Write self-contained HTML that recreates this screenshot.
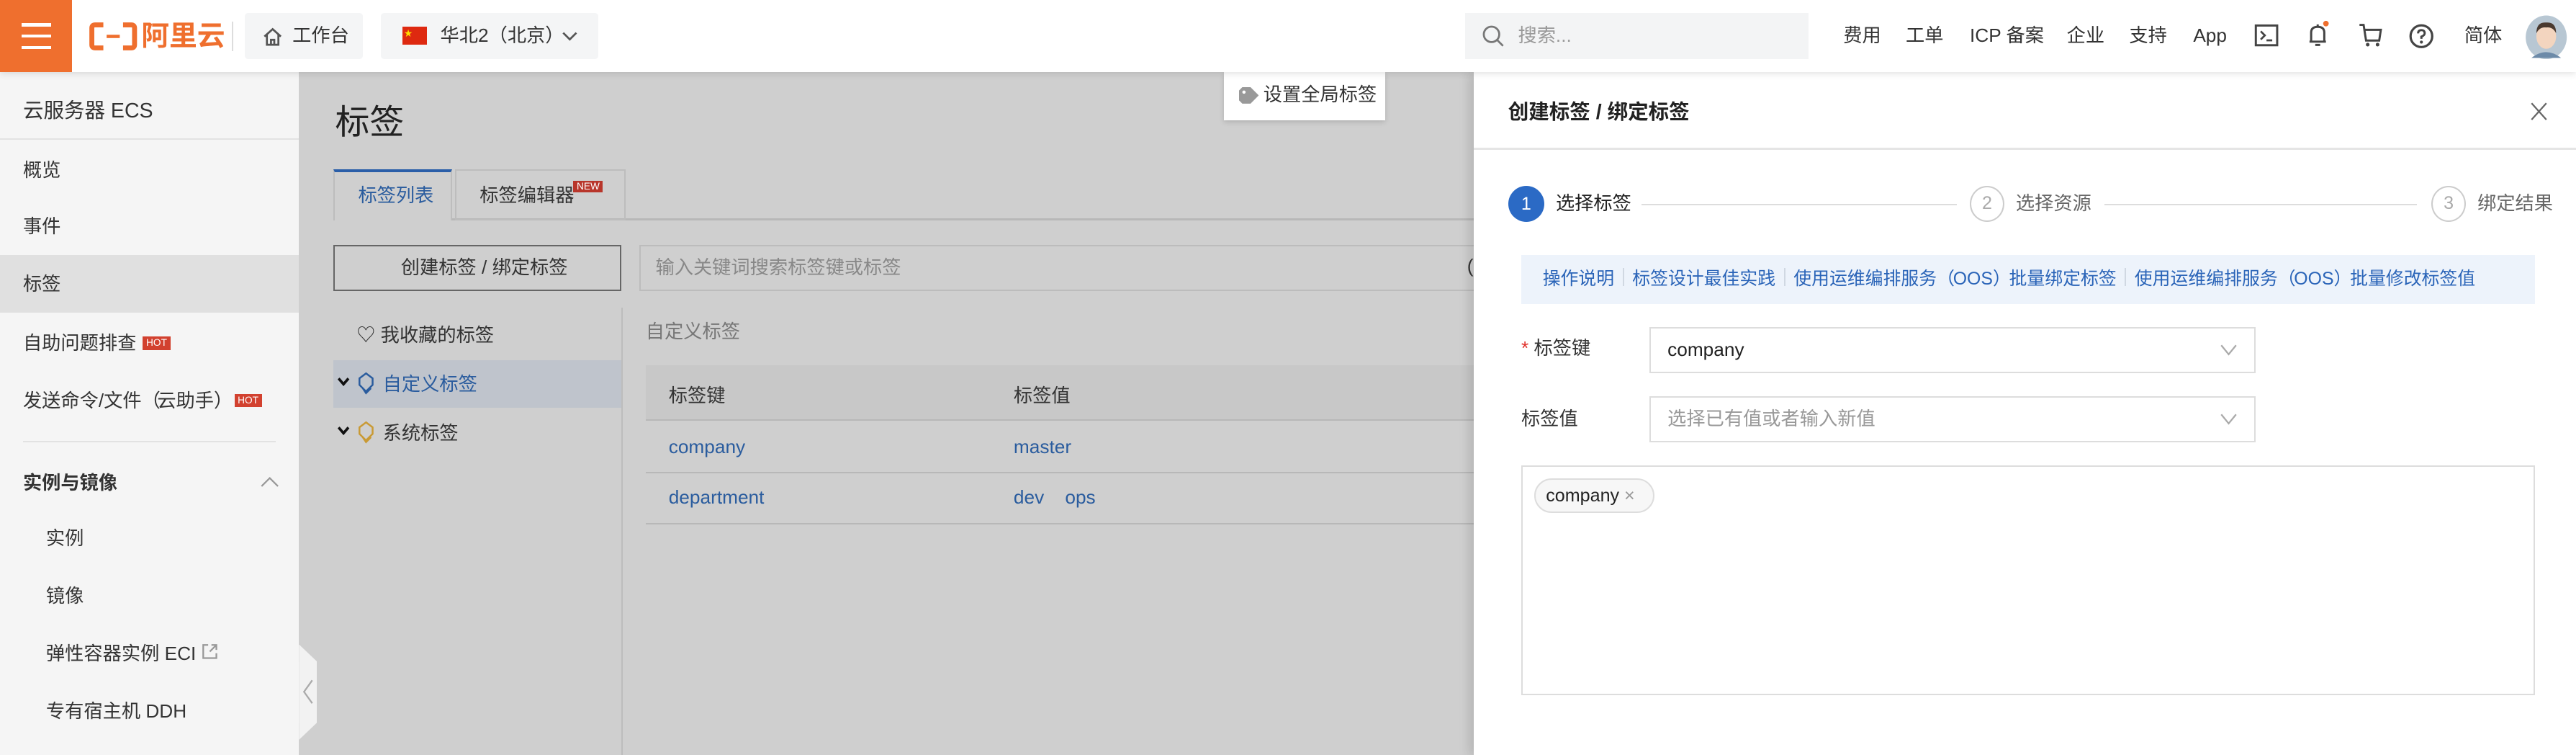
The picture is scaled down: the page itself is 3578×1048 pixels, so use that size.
<!DOCTYPE html>
<html><head><meta charset="utf-8">
<style>
*{margin:0;padding:0;box-sizing:border-box}
html,body{width:3578px;height:1048px;overflow:hidden;background:#cfcfcf}
#w{zoom:2.28189;width:1568px;height:460px;position:relative;overflow:hidden;font-family:"Liberation Sans","Noto Sans CJK SC",sans-serif;font-size:11.5px;line-height:14px;color:#333;background:#cfcfcf}
.a{position:absolute;white-space:nowrap}
.top{left:0;top:0;width:1568px;height:44px;background:#fff;box-shadow:0 1px 4px rgba(0,0,0,.12);z-index:5}
.side{left:0;top:44px;width:182px;height:416px;background:#f5f5f5}
.si{left:14px;color:#333}
.hot{display:inline-block;background:#d2412f;color:#fff;font-size:6px;line-height:8px;padding:0 2px;margin-left:4px;vertical-align:2px}
.blue{color:#2a5c9e}
.drawer{left:897px;top:44px;width:671px;height:416px;background:#fff;box-shadow:-3px 0 6px rgba(0,0,0,.12)}
.link{color:#2a64b8}
.sep{display:inline-block;width:1px;height:11px;background:#d0d8e2;margin:0 5px;vertical-align:-1px}
</style></head><body><div id="w">

<!-- top bar -->
<div class="a top">
  <div class="a" style="left:0;top:0;width:44px;height:44px;background:#ef6f2e"></div>
  <div class="a" style="left:13px;top:14px;width:18px;height:2px;background:#fff"></div>
  <div class="a" style="left:13px;top:21px;width:18px;height:2px;background:#fff"></div>
  <div class="a" style="left:13px;top:28px;width:18px;height:2px;background:#fff"></div>
  <svg class="a" style="left:54px;top:13px" width="30" height="18" viewBox="0 0 30 18"><path d="M9 2H4Q2 2 2 4V14Q2 16 4 16H9M21 2H26Q28 2 28 4V14Q28 16 26 16H21" fill="none" stroke="#ef6f2e" stroke-width="3"/><rect x="11" y="8" width="8" height="2" fill="#ef6f2e"/></svg>
  <div class="a" style="left:86px;top:13px;font-size:17px;line-height:18px;font-weight:bold;color:#ef6f2e">阿里云</div>
  <div class="a" style="left:141px;top:13px;width:1px;height:18px;background:#ddd"></div>
  <div class="a" style="left:149px;top:8px;width:72px;height:28px;background:#f4f5f6;border-radius:2px"></div>
  <svg class="a" style="left:160px;top:16px" width="12" height="12" viewBox="0 0 12 12"><path d="M1 6L6 1.5L11 6M2.5 5V11H9.5V5M5 11V8H7V11" fill="none" stroke="#555" stroke-width="1.2"/></svg>
  <div class="a" style="left:178px;top:15px;color:#333">工作台</div>
  <div class="a" style="left:232px;top:8px;width:132px;height:28px;background:#f4f5f6;border-radius:2px"></div>
  <div class="a" style="left:245px;top:16px;width:15px;height:11px;background:#de2910"></div>
  <div class="a" style="left:246px;top:14px;font-size:5px;color:#ffde00">★</div>
  <div class="a" style="left:268px;top:15px;color:#333">华北2（北京）</div>
  <svg class="a" style="left:342px;top:18px" width="10" height="8" viewBox="0 0 10 8"><path d="M1 2L5 6L9 2" fill="none" stroke="#555" stroke-width="1.2"/></svg>

  <div class="a" style="left:892px;top:8px;width:209px;height:28px;background:#f3f4f5"></div>
  <svg class="a" style="left:902px;top:15px" width="14" height="14" viewBox="0 0 14 14"><circle cx="6" cy="6" r="4.7" fill="none" stroke="#777" stroke-width="1.2"/><path d="M9.5 9.5L13 13" stroke="#777" stroke-width="1.2"/></svg>
  <div class="a" style="left:924px;top:15px;color:#999">搜索...</div>
  <div class="a" style="left:1122px;top:15px">费用</div>
  <div class="a" style="left:1160px;top:15px">工单</div>
  <div class="a" style="left:1199px;top:15px">ICP 备案</div>
  <div class="a" style="left:1258px;top:15px">企业</div>
  <div class="a" style="left:1296px;top:15px">支持</div>
  <div class="a" style="left:1335px;top:15px">App</div>
  <svg class="a" style="left:1372px;top:14px" width="15" height="15" viewBox="0 0 15 15"><rect x="1" y="1.5" width="13" height="12" fill="none" stroke="#444" stroke-width="1.3"/><path d="M4 5L6.5 7.5L4 10M7.5 10.5H11" fill="none" stroke="#444" stroke-width="1.2"/></svg>
  <svg class="a" style="left:1403px;top:12px" width="16" height="18" viewBox="0 0 16 18"><path d="M8 3V4.5M4 13V8Q4 4.5 8 4.5Q12 4.5 12 8V13M3 13.5H13M6.5 15.5H9.5" fill="none" stroke="#444" stroke-width="1.3"/><circle cx="13" cy="2.5" r="1.7" fill="#ef6f2e"/></svg>
  <svg class="a" style="left:1435px;top:13px" width="16" height="17" viewBox="0 0 16 17"><path d="M1 2H3.5L5 11.5H13L14 5H4" fill="none" stroke="#444" stroke-width="1.3"/><circle cx="6" cy="14" r="1.1" fill="#444"/><circle cx="12" cy="14" r="1.1" fill="#444"/></svg>
  <svg class="a" style="left:1466px;top:14px" width="16" height="16" viewBox="0 0 16 16"><circle cx="8" cy="8" r="6.6" fill="none" stroke="#444" stroke-width="1.4"/><path d="M6 6.3Q6 4.3 8 4.3Q10 4.3 10 6.2Q10 7.5 8 8.3V9.6" fill="none" stroke="#444" stroke-width="1.3"/><circle cx="8" cy="11.6" r=".9" fill="#444"/></svg>
  <div class="a" style="left:1500px;top:15px">简体</div>
  <svg class="a" style="left:1537px;top:9px" width="26" height="27" viewBox="0 0 26 27"><ellipse cx="13" cy="13.5" rx="12.5" ry="13.3" fill="#b8c7d3"/><path d="M4 26Q13 19 22 26" fill="#6c8aa8"/><ellipse cx="13" cy="13" rx="6" ry="7.5" fill="#f3d5bf"/><path d="M7 11Q7 4 13 4.5Q19 4 19 11Q17 7 13 7.5Q9 7 7 11Z" fill="#4a3a30"/></svg>
</div>

<!-- sidebar -->
<div class="a side"></div>
<div class="a si" style="top:61px;font-size:12.5px">云服务器 ECS</div>
<div class="a" style="left:0;top:84px;width:182px;height:1px;background:#e2e2e2"></div>
<div class="a si" style="top:97px">概览</div>
<div class="a si" style="top:131px">事件</div>
<div class="a" style="left:0;top:155px;width:182px;height:35px;background:#e0e0e0"></div>
<div class="a si" style="top:166px">标签</div>
<div class="a si" style="top:202px">自助问题排查<span class="hot">HOT</span></div>
<div class="a si" style="top:237px">发送命令/文件<span style="letter-spacing:-2px">（</span>云助手<span style="letter-spacing:-2px">）</span><span class="hot" style="margin-left:3px">HOT</span></div>
<div class="a" style="left:14px;top:268px;width:154px;height:1px;background:#e2e2e2"></div>
<div class="a si" style="top:287px;font-weight:bold">实例与镜像</div>
<svg class="a" style="left:158px;top:289px" width="12" height="8" viewBox="0 0 12 8"><path d="M1 7L6 2L11 7" fill="none" stroke="#999" stroke-width="1"/></svg>
<div class="a si" style="left:28px;top:321px">实例</div>
<div class="a si" style="left:28px;top:356px">镜像</div>
<div class="a si" style="left:28px;top:391px">弹性容器实例 ECI <svg width="10" height="10" viewBox="0 0 10 10" style="vertical-align:0"><path d="M4 1H1V9H9V6M6 1H9V4M9 1L5 5" fill="none" stroke="#999" stroke-width="1"/></svg></div>
<div class="a si" style="left:28px;top:426px">专有宿主机 DDH</div>
<div class="a" style="left:182px;top:392px;width:11px;height:58px;background:#f2f2f2;clip-path:polygon(0 0,100% 18%,100% 82%,0 100%)"></div>
<svg class="a" style="left:184px;top:413px" width="7" height="16" viewBox="0 0 7 16"><path d="M6 1L1 8L6 15" fill="none" stroke="#aaa" stroke-width="1"/></svg>

<!-- main (masked) -->
<div class="a" style="left:204px;top:63px;font-size:21px;line-height:24px;color:#222">标签</div>
<div class="a" style="left:203px;top:133px;width:700px;height:1px;background:#b8b8b8"></div>
<div class="a" style="left:203px;top:103px;width:72px;height:31px;border:1px solid #bdbdbd;border-top:2px solid #2a5ea8;border-bottom:none;background:#cfcfcf"></div>
<div class="a blue" style="left:218px;top:112px">标签列表</div>
<div class="a" style="left:277px;top:103px;width:104px;height:31px;border:1px solid #bdbdbd"></div>
<div class="a" style="left:292px;top:112px;color:#333">标签编辑器</div>
<div class="a" style="left:349px;top:110px;background:#b8362b;color:#fff;font-size:6px;line-height:7px;padding:0 2px">NEW</div>
<div class="a" style="left:203px;top:149px;width:175px;height:28px;border:1px solid #666"></div>
<div class="a" style="left:244px;top:156px;color:#333">创建标签 / 绑定标签</div>
<div class="a" style="left:389px;top:149px;width:520px;height:28px;border:1px solid #bcbcbc"></div>
<div class="a" style="left:399px;top:156px;color:#888">输入关键词搜索标签键或标签</div>
<div class="a" style="left:893px;top:155px;color:#333">(</div>
<div class="a" style="left:378px;top:187px;width:1px;height:273px;background:#bdbdbd"></div>
<div class="a" style="left:217px;top:197px;color:#333">♡ 我收藏的标签</div>
<div class="a" style="left:203px;top:219px;width:175px;height:29px;background:#bfc4cc"></div>
<svg class="a" style="left:205px;top:229px" width="8" height="6" viewBox="0 0 8 6"><path d="M1 1L4 4.5L7 1" fill="none" stroke="#111" stroke-width="1.6"/></svg>
<svg class="a" style="left:218px;top:226px" width="10" height="14" viewBox="0 0 10 14"><path d="M5 1L9 4V8L5 12L1 8V4Z M3 10L5 13L8 10" fill="none" stroke="#2a5c9e" stroke-width="1.1"/></svg>
<div class="a blue" style="left:233px;top:227px">自定义标签</div>
<svg class="a" style="left:205px;top:259px" width="8" height="6" viewBox="0 0 8 6"><path d="M1 1L4 4.5L7 1" fill="none" stroke="#111" stroke-width="1.6"/></svg>
<svg class="a" style="left:218px;top:256px" width="10" height="14" viewBox="0 0 10 14"><path d="M5 1L9 4V8L5 12L1 8V4Z M3 10L5 13L8 10" fill="none" stroke="#c99a34" stroke-width="1.1"/></svg>
<div class="a" style="left:233px;top:257px;color:#333">系统标签</div>
<div class="a" style="left:393px;top:195px;color:#777">自定义标签</div>
<div class="a" style="left:393px;top:222px;width:520px;height:34px;background:#c8c8c8;border-bottom:1px solid #b8b8b8"></div>
<div class="a" style="left:407px;top:234px;color:#333">标签键</div>
<div class="a" style="left:617px;top:234px;color:#333">标签值</div>
<div class="a blue" style="left:407px;top:265px">company</div>
<div class="a blue" style="left:617px;top:265px">master</div>
<div class="a" style="left:393px;top:287px;width:520px;height:1px;background:#b8b8b8"></div>
<div class="a blue" style="left:407px;top:296px">department</div>
<div class="a blue" style="left:617px;top:296px">dev&nbsp;&nbsp;&nbsp;&nbsp;ops</div>
<div class="a" style="left:393px;top:318px;width:520px;height:1px;background:#b8b8b8"></div>

<div class="a" style="left:745px;top:44px;width:98px;height:29px;background:#fff;box-shadow:0 1px 3px rgba(0,0,0,.15);z-index:4"></div>
<svg class="a" style="left:754px;top:53px;z-index:4" width="12" height="10" viewBox="0 0 12 10"><path d="M0 2L2 0H7L12 5L7 10H2L0 8Z" fill="#999"/><circle cx="3" cy="3" r="1" fill="#fff"/></svg>
<div class="a" style="left:769px;top:51px;color:#333;z-index:4">设置全局标签</div>

<!-- drawer -->
<div class="a drawer"></div>
<div class="a" style="left:918px;top:62px;font-size:12.5px;font-weight:bold;color:#222">创建标签 / 绑定标签</div>
<svg class="a" style="left:1540px;top:62px" width="11" height="12" viewBox="0 0 11 12"><path d="M1 1L10 11M10 1L1 11" stroke="#666" stroke-width="1"/></svg>
<div class="a" style="left:897px;top:90px;width:671px;height:1px;background:#e5e5e5"></div>

<div class="a" style="left:918px;top:113px;width:22px;height:22px;border-radius:50%;background:#2b6ac5;color:#fff;text-align:center;line-height:22px;font-size:11px">1</div>
<div class="a" style="left:947px;top:117px;color:#222">选择标签</div>
<div class="a" style="left:999px;top:124px;width:192px;height:1px;background:#ddd"></div>
<div class="a" style="left:1199px;top:113px;width:21px;height:22px;border-radius:50%;border:1px solid #ccc;color:#aaa;text-align:center;line-height:20px;font-size:11px">2</div>
<div class="a" style="left:1227px;top:117px;color:#666">选择资源</div>
<div class="a" style="left:1281px;top:124px;width:190px;height:1px;background:#ddd"></div>
<div class="a" style="left:1480px;top:113px;width:21px;height:22px;border-radius:50%;border:1px solid #ccc;color:#aaa;text-align:center;line-height:20px;font-size:11px">3</div>
<div class="a" style="left:1508px;top:117px;color:#666">绑定结果</div>

<div class="a" style="left:926px;top:155px;width:617px;height:30px;background:#edf3fb"></div>
<div class="a link" style="left:939px;top:163px;font-size:10.9px">操作说明<span class="sep"></span>标签设计最佳实践<span class="sep"></span>使用运维编排服务<span style="letter-spacing:-1px">（</span>OOS<span style="letter-spacing:-1px">）</span>批量绑定标签<span class="sep"></span>使用运维编排服务<span style="letter-spacing:-1px">（</span>OOS<span style="letter-spacing:-1px">）</span>批量修改标签值</div>

<div class="a" style="left:926px;top:205px;color:#333"><span style="color:#e0302a">*</span> 标签键</div>
<div class="a" style="left:1004px;top:199px;width:369px;height:28px;border:1px solid #ddd"></div>
<div class="a" style="left:1015px;top:206px;color:#222">company</div>
<svg class="a" style="left:1351px;top:209px" width="11" height="8" viewBox="0 0 11 8"><path d="M1 1L5.5 6.5L10 1" fill="none" stroke="#aaa" stroke-width="1"/></svg>
<div class="a" style="left:926px;top:248px;color:#333">标签值</div>
<div class="a" style="left:1004px;top:241px;width:369px;height:28px;border:1px solid #ddd"></div>
<div class="a" style="left:1015px;top:248px;color:#999">选择已有值或者输入新值</div>
<svg class="a" style="left:1351px;top:251px" width="11" height="8" viewBox="0 0 11 8"><path d="M1 1L5.5 6.5L10 1" fill="none" stroke="#aaa" stroke-width="1"/></svg>
<div class="a" style="left:926px;top:283px;width:617px;height:140px;border:1px solid #ddd"></div>
<div class="a" style="left:934px;top:291px;width:73px;height:21px;border:1px solid #ddd;border-radius:11px;background:#f7f7f7"></div>
<div class="a" style="left:941px;top:295px;font-size:11px;color:#222">company <span style="color:#999">×</span></div>

</div></body></html>
